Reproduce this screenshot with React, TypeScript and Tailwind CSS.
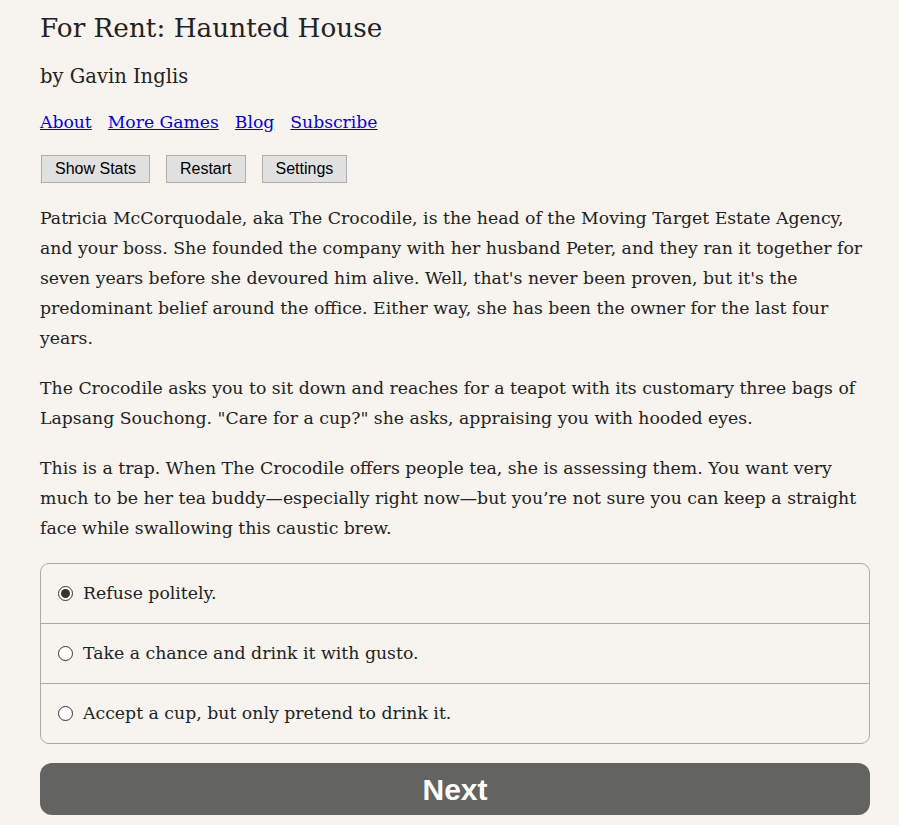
import React, { useState } from "react";

const serif = { fontFamily: '"DejaVu Serif", serif' };

const choices = [
  "Refuse politely.",
  "Take a chance and drink it with gusto.",
  "Accept a cup, but only pretend to drink it.",
];

function ToolButton({ label }: { label: string }) {
  return (
    <button className="h-[28px] px-[13px] bg-[#e1e1e1] border border-[#adadad] text-[16px] text-black font-['Liberation_Sans',sans-serif]">
      {label}
    </button>
  );
}

export default function App() {
  const [picked, setPicked] = useState(0);

  return (
    <div className="min-h-[825px] bg-[#f7f4f0] text-[#222]" style={serif}>
      <div className="w-[830px] ml-[40px] pt-[9px]">
        <h1 className="text-[26.3px] leading-[38px]">For Rent: Haunted House</h1>
        <div className="mt-[16px] text-[19.5px] leading-[28px]">by Gavin Inglis</div>
        <div className="mt-[17px] flex gap-[16px] text-[17.2px] leading-[28px]">
          <a href="#" className="text-[#0000ee] underline">About</a>
          <a href="#" className="text-[#0000ee] underline">More Games</a>
          <a href="#" className="text-[#0000ee] underline">Blog</a>
          <a href="#" className="text-[#0000ee] underline">Subscribe</a>
        </div>
        <div className="mt-[19px] ml-[1px] flex gap-[16px]">
          <ToolButton label="Show Stats" />
          <ToolButton label="Restart" />
          <ToolButton label="Settings" />
        </div>

        <div className="mt-[20px] text-[17.3px] leading-[30px]">
          <p>
            Patricia McCorquodale, aka The Crocodile, is the head of the Moving Target Estate Agency,<br />
            and your boss. She founded the company with her husband Peter, and they ran it together for<br />
            seven years before she devoured him alive. Well, that's never been proven, but it's the<br />
            predominant belief around the office. Either way, she has been the owner for the last four<br />
            years.
          </p>
          <p className="mt-[20px]">
            The Crocodile asks you to sit down and reaches for a teapot with its customary three bags of<br />
            Lapsang Souchong. "Care for a cup?" she asks, appraising you with hooded eyes.
          </p>
          <p className="mt-[20px]">
            This is a trap. When The Crocodile offers people tea, she is assessing them. You want very<br />
            much to be her tea buddy—especially right now—but you’re not sure you can keep a straight<br />
            face while swallowing this caustic brew.
          </p>
        </div>

        <div className="mt-[20px] border border-[#aaa] rounded-[9px] overflow-hidden">
          {choices.map((c, i) => (
            <label
              key={c}
              className={`flex items-center pl-[17px] text-[17.3px] cursor-pointer ${i > 0 ? "h-[60px] border-t border-[#aaa]" : "h-[59px]"}`}
            >
              <span className="w-[15px] h-[15px] rounded-full border border-[#333] bg-white flex items-center justify-center">
                {picked === i && <span className="w-[9px] h-[9px] rounded-full bg-[#333]" />}
              </span>
              <input
                type="radio"
                name="choice"
                className="hidden"
                checked={picked === i}
                onChange={() => setPicked(i)}
              />
              <span className="ml-[10px]">{c}</span>
            </label>
          ))}
        </div>

        <button className="mt-[19px] w-full h-[52px] rounded-[12px] bg-[#636360] text-white text-[30px] font-bold font-['Liberation_Sans',sans-serif]">
          Next
        </button>
      </div>
    </div>
  );
}
